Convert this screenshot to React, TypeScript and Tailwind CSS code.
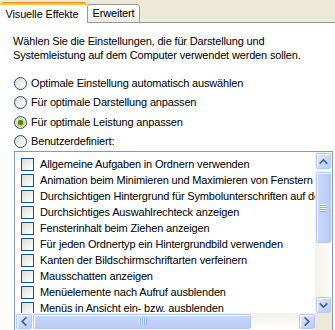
import React from "react";

const items = [
  "Allgemeine Aufgaben in Ordnern verwenden",
  "Animation beim Minimieren und Maximieren von Fenstern",
  "Durchsichtigen Hintergrund für Symbolunterschriften auf dem Desktop verwenden",
  "Durchsichtiges Auswahlrechteck anzeigen",
  "Fensterinhalt beim Ziehen anzeigen",
  "Für jeden Ordnertyp ein Hintergrundbild verwenden",
  "Kanten der Bildschirmschriftarten verfeinern",
  "Mausschatten anzeigen",
  "Menüelemente nach Aufruf ausblenden",
  "Menüs in Ansicht ein- bzw. ausblenden",
];

const radios = [
  { label: "Optimale Einstellung automatisch auswählen", h: "h-[20px]", checked: false },
  { label: "Für optimale Darstellung anpassen", h: "h-[19px]", checked: false },
  { label: "Für optimale Leistung anpassen", h: "h-[20px]", checked: true },
  { label: "Benutzerdefiniert:", h: "h-[19px]", checked: false },
];

function Radio({ checked }: { checked: boolean }) {
  return (
    <div className="w-[13px] h-[13px] rounded-full border border-[#1C5180] bg-gradient-to-br from-[#DCDCD7] to-white flex items-center justify-center shrink-0">
      {checked && (
        <div className="w-[9px] h-[9px] rounded-full bg-gradient-to-br from-[#FEDF9C] to-[#F8B33D] flex items-center justify-center">
          <div className="w-[5px] h-[5px] rounded-full bg-[#21A121] shadow-[inset_0_0_1px_#0d6b0d]" />
        </div>
      )}
    </div>
  );
}

function ArrowBtn({ dir }: { dir: "up" | "down" | "left" | "right" }) {
  const paths: Record<string, string> = {
    up: "M4 10 L8 6 L12 10",
    down: "M4 6 L8 10 L12 6",
    left: "M10 4 L6 8 L10 12",
    right: "M6 4 L10 8 L6 12",
  };
  return (
    <div className="w-full h-full rounded-[2px] border border-[#B4C8F6] bg-gradient-to-br from-[#E1EAFE] to-[#B6CAF7] shadow-[inset_1px_1px_0_#ffffff] flex items-center justify-center">
      <svg width="15" height="15" viewBox="0 0 16 16">
        <path d={paths[dir]} fill="none" stroke="#4D6185" strokeWidth="2" strokeLinecap="square" />
      </svg>
    </div>
  );
}

export default function App() {
  return (
    <div className="w-[335px] h-[330px] overflow-hidden bg-white text-black text-[11px] tracking-[-0.16px] font-['Liberation_Sans',Arial,sans-serif]">
      {/* Tabs */}
      <div className="h-[23px] bg-[#ECE9D8] flex items-end">
        <div className="w-[87px] h-[21px] bg-white rounded-t-[3px] overflow-hidden flex flex-col">
          <div className="h-px bg-[#E68B2C] mx-[2px]" />
          <div className="h-[2px] bg-[#FFC73C]" />
          <div className="flex-1 flex items-center justify-center pr-[3px] leading-none">Visuelle Effekte</div>
        </div>
        <div className="w-[53px] h-[19px] border border-[#919B9C] rounded-t-[3px] bg-gradient-to-b from-white to-[#ECEBE6] flex items-center justify-center leading-none">
          Erweitert
        </div>
        <div className="flex-1 h-px bg-[#919B9C]" />
      </div>

      {/* Content */}
      <div className="pl-[13px]">
        <p className="mt-[11px] leading-[14px]">
          Wählen Sie die Einstellungen, die für Darstellung und
          <br />
          Systemleistung auf dem Computer verwendet werden sollen.
        </p>

        <div className="mt-[11px] flex flex-col">
          {radios.map((r) => (
            <div key={r.label} className={`${r.h} flex items-center gap-[4px] pl-[1px]`}>
              <Radio checked={r.checked} />
              <span className="leading-none">{r.label}</span>
            </div>
          ))}
        </div>

        {/* List box */}
        <div className="ml-[1px] w-[319px] h-[180px] border border-[#7F9DB9] bg-white grid grid-cols-[300px_17px] grid-rows-[161px_17px]">
          <div className="overflow-hidden pt-[4px] pl-[6px]">
            {items.map((t) => (
              <div key={t} className="h-[16px] flex items-center gap-[6px] whitespace-nowrap">
                <div className="w-[13px] h-[13px] border border-[#1C5180] bg-gradient-to-br from-[#DCDCD7] to-white shrink-0" />
                <span className="leading-none">{t}</span>
              </div>
            ))}
          </div>

          {/* Vertical scrollbar */}
          <div className="bg-gradient-to-r from-[#F3F1EC] to-[#FEFEFB] flex flex-col px-px pt-px">
            <div className="h-[16px]">
              <ArrowBtn dir="up" />
            </div>
            <div className="h-[3px]" />
            <div className="h-[71px] rounded-[2px] border border-[#B4C8F6] bg-gradient-to-r from-[#C9D8FC] to-[#B8CCF8] shadow-[inset_1px_1px_0_#ffffff] flex items-center justify-center">
              <div className="flex flex-col gap-px">
                {[0, 1, 2, 3].map((i) => (
                  <div key={i} className="w-[7px] h-px bg-[#EEF4FE] shadow-[0_1px_0_#8CB0F8]" />
                ))}
              </div>
            </div>
            <div className="flex-1" />
            <div className="h-[16px]">
              <ArrowBtn dir="down" />
            </div>
          </div>

          {/* Horizontal scrollbar */}
          <div className="bg-gradient-to-b from-[#F3F1EC] to-[#FEFEFB] flex py-px pl-px">
            <div className="w-[16px]">
              <ArrowBtn dir="left" />
            </div>
            <div className="w-[1px]" />
            <div className="w-[218px] rounded-[2px] border border-[#B4C8F6] bg-gradient-to-b from-[#C9D8FC] to-[#B8CCF8] shadow-[inset_1px_1px_0_#ffffff] flex items-center justify-center">
              <div className="flex gap-px">
                {[0, 1, 2, 3].map((i) => (
                  <div key={i} className="w-px h-[7px] bg-[#EEF4FE] shadow-[1px_0_0_#8CB0F8]" />
                ))}
              </div>
            </div>
            <div className="flex-1" />
            <div className="w-[16px]">
              <ArrowBtn dir="right" />
            </div>
          </div>

          <div className="bg-[#ECE9D8]" />
        </div>
      </div>
    </div>
  );
}
